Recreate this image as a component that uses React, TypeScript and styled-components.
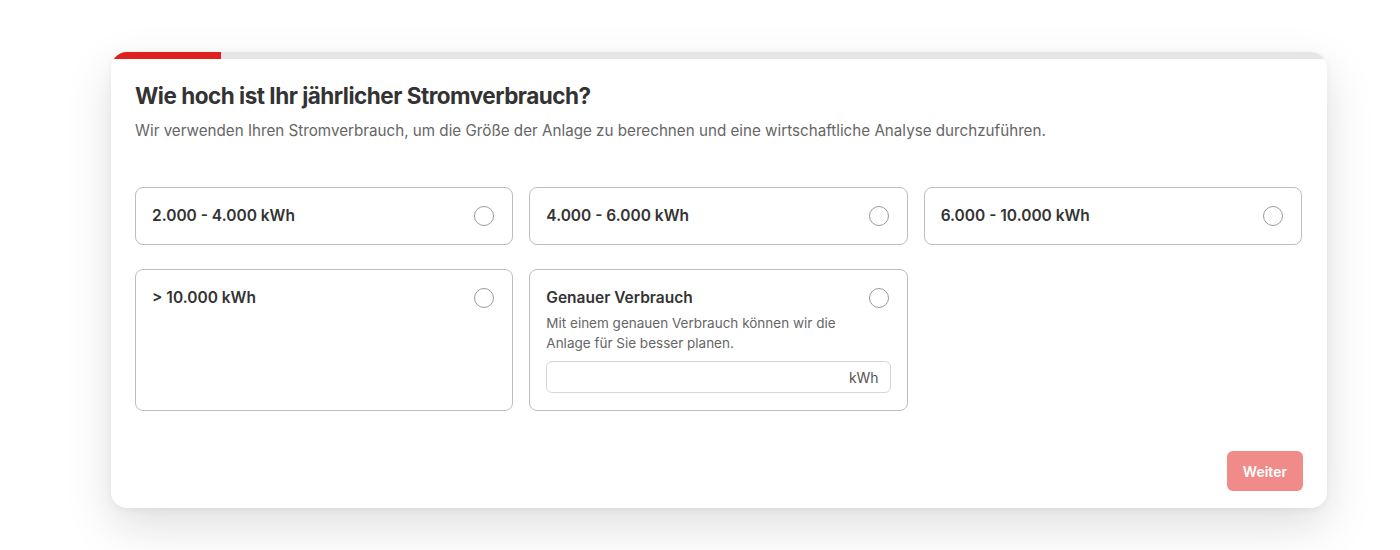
import React from "react";
import styled, { createGlobalStyle } from "styled-components";

const Global = createGlobalStyle`
  html, body { margin: 0; padding: 0; background: #ffffff; }
  body { font-family: Inter, "Noto Sans", Arial, sans-serif; color: #333; -webkit-font-smoothing: antialiased; }
  * { box-sizing: border-box; }
`;

const Page = styled.div`
  padding: 52px 0 0 111px;
  width: 1400px;
  height: 550px;
  overflow: hidden;
`;

const Card = styled.div`
  width: 1216px;
  background: #fff;
  border-radius: 16px;
  overflow: hidden;
  box-shadow: 0 18px 48px rgba(0, 0, 0, 0.13), 0 2px 8px rgba(0, 0, 0, 0.05);
`;

const Progress = styled.div`
  height: 7px;
  background: #e6e6e6;
`;

const ProgressFill = styled.div`
  height: 100%;
  background: #e0201f;
`;

const Body = styled.div`
  padding: 23px 24px 17px 24px;
  display: flex;
  flex-direction: column;
`;

const Title = styled.h1`
  margin: 0;
  font-size: 22.5px;
  line-height: 28px;
  font-weight: 700;
  letter-spacing: -0.5px;
  color: #333;
`;

const Subtitle = styled.p`
  margin: 10px 0 0;
  font-size: 15.2px;
  line-height: 22px;
  color: #666;
`;

const Grid = styled.div`
  margin-top: 45px;
  display: grid;
  grid-template-columns: repeat(3, 1fr);
  column-gap: 16px;
  row-gap: 24px;
  padding-right: 1px;
`;

const Option = styled.div<{ $tall?: boolean }>`
  border: 1px solid #bdbdbd;
  border-radius: 8px;
  padding: 17px 18px 16px 16px;
  min-height: ${(p) => (p.$tall ? "142px" : "58px")};
  display: flex;
  flex-direction: column;
  background: #fff;
`;

const OptionHead = styled.div`
  display: flex;
  align-items: center;
  justify-content: space-between;
`;

const OptionLabel = styled.span`
  font-size: 15.5px;
  line-height: 22px;
  font-weight: 600;
  color: #333;
`;

const Radio = styled.span`
  width: 20px;
  height: 20px;
  border: 1.5px solid #9a9a9a;
  border-radius: 50%;
  flex-shrink: 0;
`;

const Desc = styled.p`
  margin: 4px 30px 0 0;
  font-size: 13.5px;
  line-height: 20px;
  color: #666;
`;

const InputWrap = styled.div`
  margin-top: 8px;
  margin-right: -2px;
  height: 32px;
  border: 1px solid #d6d6d6;
  border-radius: 6px;
  display: flex;
  align-items: center;
  padding: 0 11px;
`;

const Input = styled.input`
  flex: 1;
  border: none;
  outline: none;
  background: transparent;
  font: inherit;
  font-size: 14px;
`;

const Unit = styled.span`
  font-size: 14px;
  color: #555;
`;

const Footer = styled.div`
  margin-top: 40px;
  display: flex;
  justify-content: flex-end;
`;

const Button = styled.button`
  height: 40px;
  padding: 0 16px;
  border: none;
  border-radius: 6px;
  background: #f08b89;
  color: #fff;
  font-family: inherit;
  font-size: 14px;
  font-weight: 600;
  cursor: not-allowed;
`;

const simple = ["2.000 - 4.000 kWh", "4.000 - 6.000 kWh", "6.000 - 10.000 kWh"];

export default function App() {
  return (
    <>
      <Global />
      <Page>
        <Card>
          <Progress>
            <ProgressFill style={{ width: `${(110 / 1216) * 100}%` }} />
          </Progress>
          <Body>
            <Title>Wie hoch ist Ihr jährlicher Stromverbrauch?</Title>
            <Subtitle>
              Wir verwenden Ihren Stromverbrauch, um die Größe der Anlage zu berechnen und eine wirtschaftliche Analyse durchzuführen.
            </Subtitle>
            <Grid>
              {simple.map((s) => (
                <Option key={s}>
                  <OptionHead>
                    <OptionLabel>{s}</OptionLabel>
                    <Radio />
                  </OptionHead>
                </Option>
              ))}
              <Option $tall>
                <OptionHead>
                  <OptionLabel>&gt; 10.000 kWh</OptionLabel>
                  <Radio />
                </OptionHead>
              </Option>
              <Option $tall>
                <OptionHead>
                  <OptionLabel>Genauer Verbrauch</OptionLabel>
                  <Radio />
                </OptionHead>
                <Desc>Mit einem genauen Verbrauch können wir die Anlage für Sie besser planen.</Desc>
                <InputWrap>
                  <Input />
                  <Unit>kWh</Unit>
                </InputWrap>
              </Option>
            </Grid>
            <Footer>
              <Button>Weiter</Button>
            </Footer>
          </Body>
        </Card>
      </Page>
    </>
  );
}
